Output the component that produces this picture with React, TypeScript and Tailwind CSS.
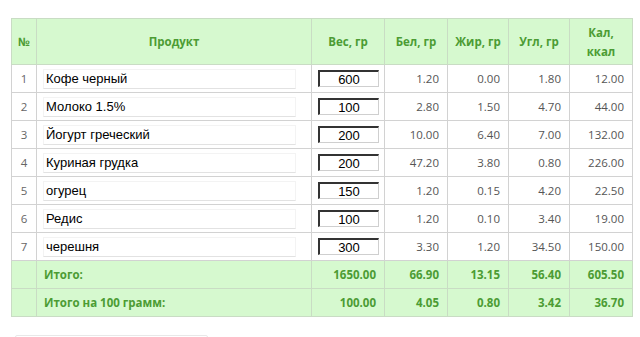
import { useState } from "react";

type Row = { id: number; name: string; weight: string; p: string; f: string; c: string; kcal: string };

const initial: Row[] = [
  { id: 1, name: "Кофе черный", weight: "600", p: "1.20", f: "0.00", c: "1.80", kcal: "12.00" },
  { id: 2, name: "Молоко 1.5%", weight: "100", p: "2.80", f: "1.50", c: "4.70", kcal: "44.00" },
  { id: 3, name: "Йогурт греческий", weight: "200", p: "10.00", f: "6.40", c: "7.00", kcal: "132.00" },
  { id: 4, name: "Куриная грудка", weight: "200", p: "47.20", f: "3.80", c: "0.80", kcal: "226.00" },
  { id: 5, name: "огурец", weight: "150", p: "1.20", f: "0.15", c: "4.20", kcal: "22.50" },
  { id: 6, name: "Редис", weight: "100", p: "1.20", f: "0.10", c: "3.40", kcal: "19.00" },
  { id: 7, name: "черешня", weight: "300", p: "3.30", f: "1.20", c: "34.50", kcal: "150.00" },
];

const cell = "border border-[#d2d2d2] h-[28px] p-0";
const num = `${cell} text-right pr-[8px] text-[#555]`;
const head = "border border-[#c9dcc4] text-center font-bold text-[#4c9c34] text-[11.5px] leading-[19px] px-1";
const totBase = "border border-[#c9dcc4] h-[28px] font-bold text-[#4c9c34]";
const tot = `${totBase} text-right pr-[8px]`;
const totLabel = `${totBase} text-left pl-[7px]`;

export default function App() {
  const [rows, setRows] = useState<Row[]>(initial);

  const edit = (id: number, key: "name" | "weight", v: string) =>
    setRows(list => list.map(r => (r.id === id ? { ...r, [key]: v } : r)));

  return (
    <div className="bg-white w-[640px] h-[337px] overflow-hidden pt-[18px] pl-[11px]" style={{ fontFamily: '"Open Sans", "DejaVu Sans", sans-serif' }}>
      <table className="table-fixed border-collapse w-[621px] text-[11.5px]">
        <colgroup>
          <col className="w-[25px]" />
          <col className="w-[275px]" />
          <col className="w-[73px]" />
          <col className="w-[63px]" />
          <col className="w-[61px]" />
          <col className="w-[61px]" />
          <col className="w-[63px]" />
        </colgroup>
        <thead>
          <tr className="bg-[#d6f9cf] h-[46px]">
            <th className={head}>№</th>
            <th className={head}>Продукт</th>
            <th className={head}>Вес, гр</th>
            <th className={head}>Бел, гр</th>
            <th className={head}>Жир, гр</th>
            <th className={head}>Угл, гр</th>
            <th className={head}>Кал,<br />ккал</th>
          </tr>
        </thead>
        <tbody>
          {rows.map(r => (
            <tr key={r.id}>
              <td className={`${cell} text-center text-[#666]`}>{r.id}</td>
              <td className={`${cell} px-[6px]`}>
                <input
                  value={r.name}
                  onChange={e => edit(r.id, "name", e.target.value)}
                  className="block w-[253px] h-[20px] px-[2px] border border-[#f3f3f3] border-b-[#e2e2e2] text-[13px] text-black outline-none"
                  style={{ fontFamily: '"Liberation Sans", Arial, sans-serif' }}
                />
              </td>
              <td className={`${cell} px-[6px]`}>
                <input
                  value={r.weight}
                  onChange={e => edit(r.id, "weight", e.target.value)}
                  className="block w-[61px] h-[17px] text-center border-t-2 border-l-2 border-t-[#333] border-l-[#333] border-b border-r border-b-[#cfcfcf] border-r-[#cfcfcf] text-[13px] leading-[13px] text-black outline-none"
                  style={{ fontFamily: '"Liberation Sans", Arial, sans-serif' }}
                />
              </td>
              <td className={num}>{r.p}</td>
              <td className={num}>{r.f}</td>
              <td className={num}>{r.c}</td>
              <td className={num}>{r.kcal}</td>
            </tr>
          ))}
          <tr className="bg-[#d6f9cf]">
            <td className={tot}></td>
            <td className={totLabel}>Итого:</td>
            <td className={tot}>1650.00</td>
            <td className={tot}>66.90</td>
            <td className={tot}>13.15</td>
            <td className={tot}>56.40</td>
            <td className={tot}>605.50</td>
          </tr>
          <tr className="bg-[#d6f9cf]">
            <td className={tot}></td>
            <td className={totLabel}>Итого на 100 грамм:</td>
            <td className={tot}>100.00</td>
            <td className={tot}>4.05</td>
            <td className={tot}>0.80</td>
            <td className={tot}>3.42</td>
            <td className={tot}>36.70</td>
          </tr>
        </tbody>
      </table>
      <div className="mt-[18px] ml-[4px] w-[193px] h-[10px] border border-[#e8e8e8] rounded-[2px]" />
    </div>
  );
}
